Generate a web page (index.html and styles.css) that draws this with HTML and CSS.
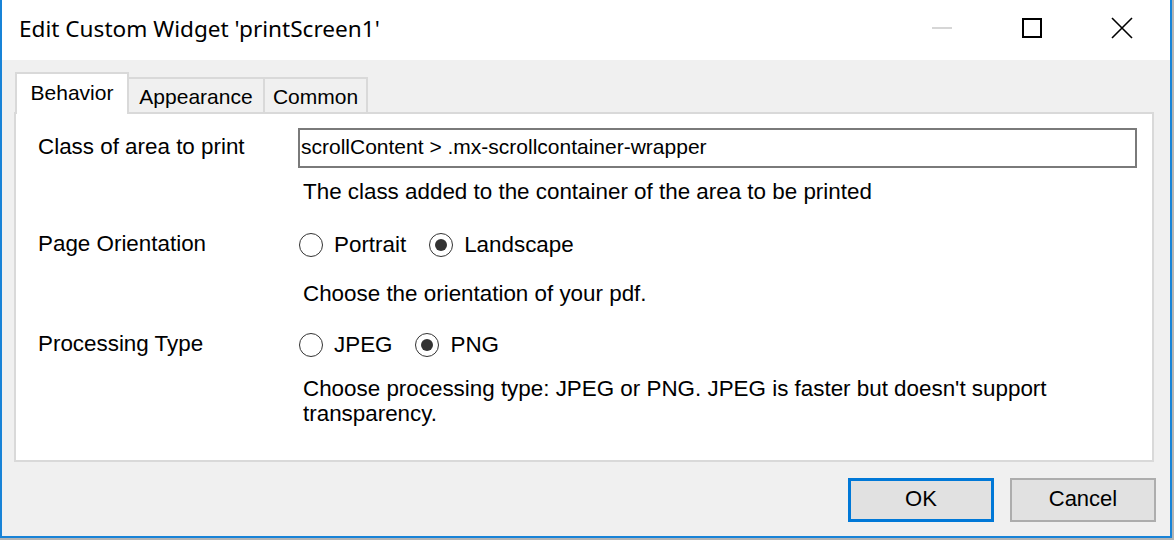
FILE: index.html
```html
<!DOCTYPE html>
<html>
<head>
<meta charset="utf-8">
<link rel="stylesheet" href="styles.css">
</head>
<body>
<div class="window">
  <div class="titlebar">
    <span class="title">Edit Custom Widget 'printScreen1'</span>
    <div class="controls">
      <div class="ctl"><svg width="22" height="4" viewBox="0 0 22 4"><line x1="1" y1="2" x2="21" y2="2" stroke="#c8c8c8" stroke-width="1.5"/></svg></div>
      <div class="ctl"><svg width="22" height="22" viewBox="0 0 22 22"><rect x="2" y="2" width="18" height="18" fill="none" stroke="#000" stroke-width="2"/></svg></div>
      <div class="ctl"><svg width="24" height="24" viewBox="0 0 24 24"><path d="M2 2 L22 22 M22 2 L2 22" stroke="#000" stroke-width="1.6" fill="none"/></svg></div>
    </div>
  </div>
  <div class="body">
    <div class="tabs">
      <div class="tab active">Behavior</div>
      <div class="tab t-app">Appearance</div>
      <div class="tab t-com">Common</div>
    </div>
    <div class="panel">
      <div class="field f1">
        <div class="row">
          <div class="label">Class of area to print</div>
          <div class="input">scrollContent &gt; .mx-scrollcontainer-wrapper</div>
        </div>
        <div class="desc d1">The class added to the container of the area to be printed</div>
      </div>
      <div class="field f2">
        <div class="row">
          <div class="label">Page Orientation</div>
          <div class="radios">
            <div class="opt"><span class="radio"></span><span>Portrait</span></div>
            <div class="opt"><span class="radio checked"></span><span>Landscape</span></div>
          </div>
        </div>
        <div class="desc d2">Choose the orientation of your pdf.</div>
      </div>
      <div class="field f3">
        <div class="row">
          <div class="label">Processing Type</div>
          <div class="radios">
            <div class="opt"><span class="radio"></span><span>JPEG</span></div>
            <div class="opt"><span class="radio checked"></span><span>PNG</span></div>
          </div>
        </div>
        <div class="desc d3">Choose processing type: JPEG or PNG. JPEG is faster but doesn't support transparency.</div>
      </div>
    </div>
    <div class="buttons">
      <div class="btn ok">OK</div>
      <div class="btn cancel">Cancel</div>
    </div>
  </div>
</div>
</body>
</html>
```
FILE: styles.css
```css
html, body {
  margin: 0;
  padding: 0;
}
body {
  background: #b4b4b4;
  width: 1174px;
  height: 540px;
  overflow: hidden;
  font-family: "Liberation Sans", Arial, sans-serif;
  color: #000;
}
.window {
  width: 1172px;
  height: 538px;
  box-sizing: border-box;
  border: 2px solid #1883d7;
  border-top: 0;
  background: #f0f0f0;
  display: flex;
  flex-direction: column;
}
.titlebar {
  height: 60px;
  background: #fff;
  display: flex;
  align-items: center;
}
.title {
  font-family: "Noto Sans", "Open Sans", sans-serif;
  font-size: 22.6px;
  padding-left: 17px;
  padding-bottom: 4px;
}
.controls {
  margin-left: auto;
  margin-right: 3px;
  display: flex;
  height: 100%;
}
.ctl {
  width: 90px;
  display: flex;
  align-items: center;
  justify-content: center;
  padding-bottom: 4px;
}
.body {
  flex: 1;
  padding: 12px 16px 0 12px;
  display: flex;
  flex-direction: column;
}
.tabs {
  display: flex;
  align-items: flex-end;
  height: 40px;
  padding-left: 1px;
}
.tab {
  box-sizing: border-box;
  font-size: 21px;
  display: flex;
  justify-content: center;
  align-items: center;
  border: 2px solid #d9d9d9;
  border-bottom: 0;
  height: 35px;
  padding-top: 2px;
}
.tab.active {
  position: relative;
  z-index: 1;
  background: #fff;
  height: 42px;
  margin-bottom: -2px;
  width: 114px;
  padding-top: 0;
  padding-bottom: 2px;
}
.t-app {
  width: 136px;
  border-left: 0;
}
.t-com {
  width: 103px;
  border-left: 0;
}
.panel {
  background: #fff;
  border: 2px solid #d9d9d9;
  height: 350px;
  box-sizing: border-box;
  padding: 14px 15px 0 22px;
  font-size: 22.4px;
}
.row {
  display: flex;
  align-items: center;
  height: 40px;
}
.label {
  width: 260px;
  flex: none;
  padding-bottom: 2px;
}
.input {
  flex: 1;
  height: 40px;
  box-sizing: border-box;
  border: 2px solid #7a7a7a;
  font-size: 21px;
  padding: 0 0 2px 1px;
  display: flex;
  align-items: center;
}
.desc {
  margin-left: 265px;
  line-height: 25px;
}
.d1 { margin-top: 11px; }
.f2 { margin-top: 21px; }
.d2 { margin-top: 16px; }
.f3 { margin-top: 19px; }
.d3 { margin-top: 11px; }
.radios {
  display: flex;
  gap: 23px;
  padding-left: 1px;
}
.opt {
  display: flex;
  align-items: center;
  gap: 11px;
}
.radio {
  width: 24px;
  height: 24px;
  box-sizing: border-box;
  border: 1.5px solid #333;
  border-radius: 50%;
  display: flex;
  align-items: center;
  justify-content: center;
}
.radio.checked::after {
  content: "";
  width: 12px;
  height: 12px;
  border-radius: 50%;
  background: #333;
}
.buttons {
  display: flex;
  justify-content: flex-end;
  gap: 16px;
  margin-top: 16px;
  margin-right: -2px;
}
.btn {
  width: 146px;
  height: 44px;
  box-sizing: border-box;
  background: #e1e1e1;
  font-size: 22px;
  display: flex;
  align-items: center;
  justify-content: center;
  padding-bottom: 2px;
}
.ok {
  border: 3px solid #0078d7;
}
.cancel {
  border: 2px solid #adadad;
}
```
